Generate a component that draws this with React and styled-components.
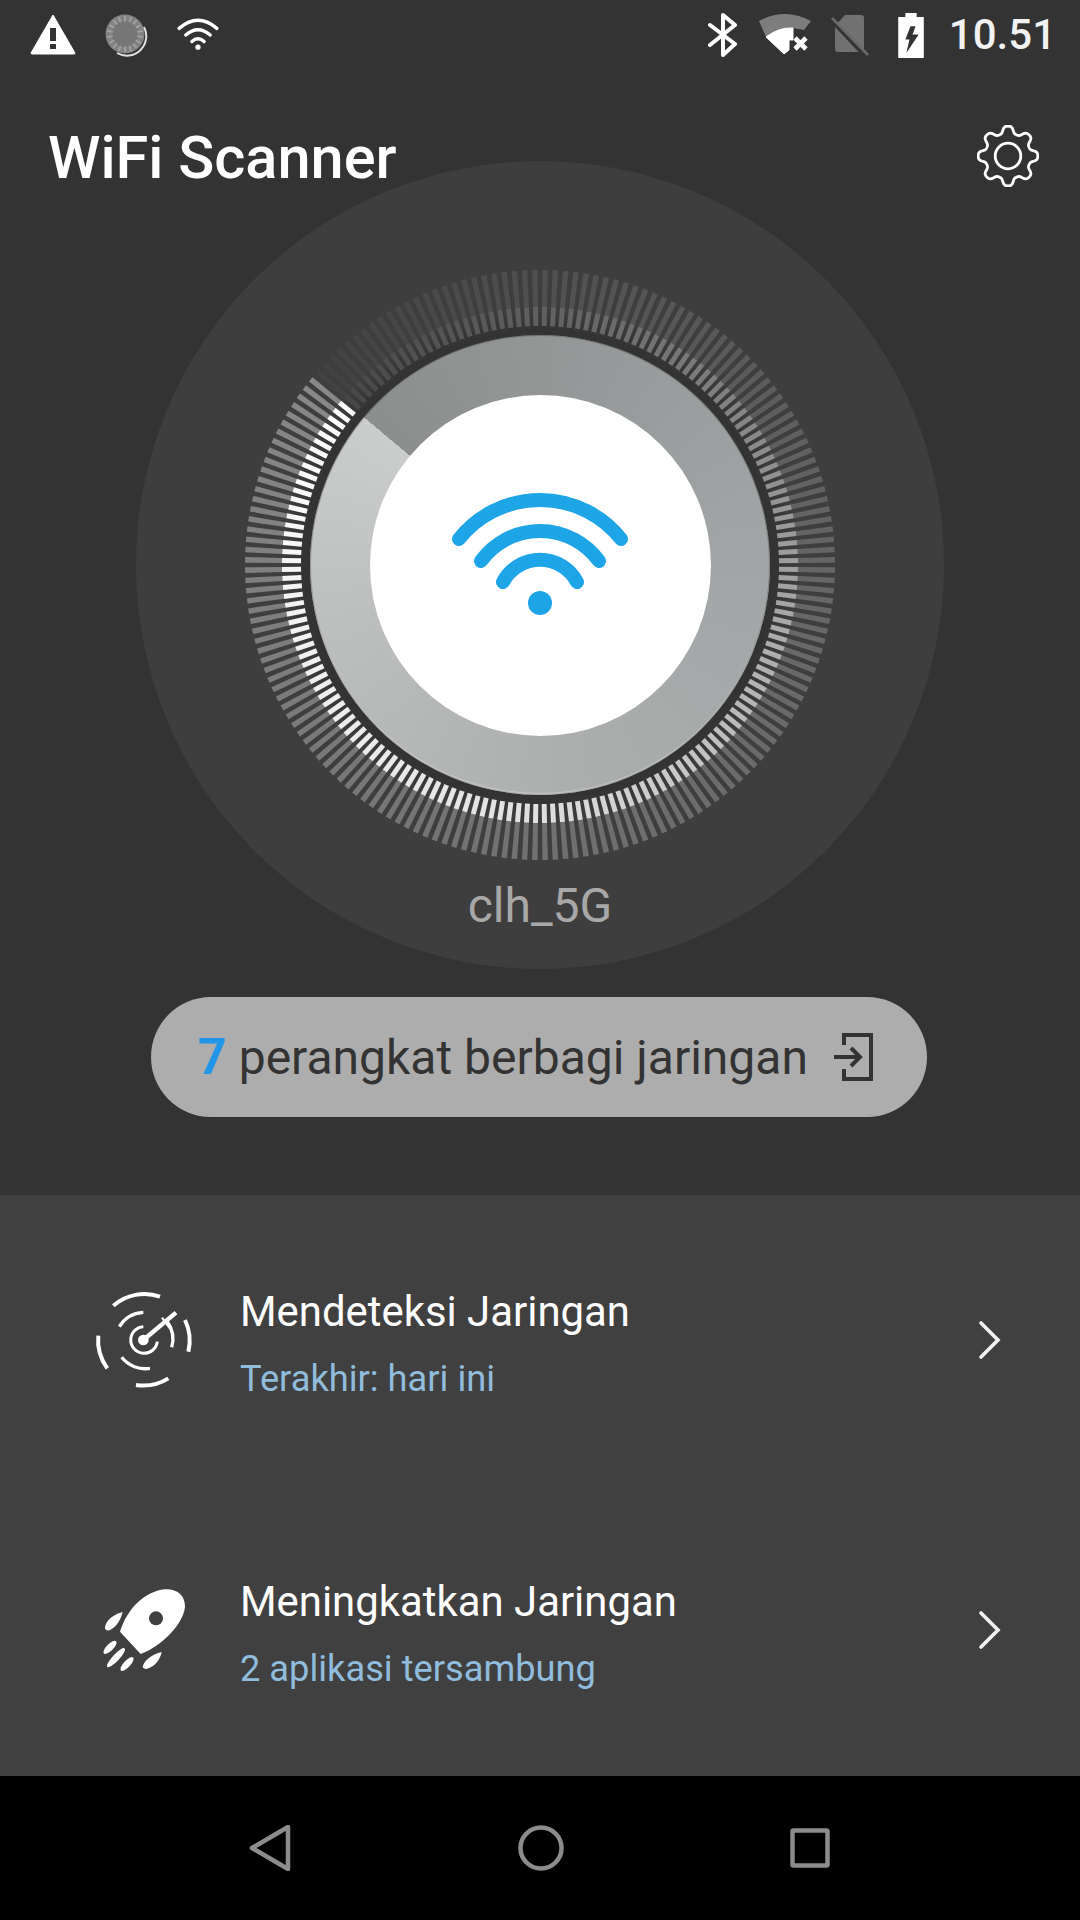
import React from 'react';
import styled, { createGlobalStyle } from 'styled-components';

const Global = createGlobalStyle`
  html, body { margin: 0; padding: 0; background: #000; }
  body { font-family: Roboto, "Liberation Sans", sans-serif; }
`;
const Screen = styled.div`
  width: 1080px; height: 1920px; display: flex; flex-direction: column; background: #333333; overflow: hidden;
`;
const StatusBar = styled.div`
  height: 70px; display: flex; align-items: center; justify-content: space-between; padding: 0 24px 0 30px; flex: none;
`;
const IconGroup = styled.div`
  display: flex; align-items: center; gap: ${p => p.$gap}px;
`;
const Clock = styled.span`
  font-size: 42px; font-weight: 500; color: #f2f2f2; margin-left: 5px; line-height: 48px;
`;
const Header = styled.div`
  height: 100px; display: flex; align-items: center; justify-content: space-between; padding: 0 41px 0 48px; position: relative; z-index: 2; flex: none; margin-top: 36px;
`;
const Title = styled.h1`
  margin: 0; padding-top: 4px; font-size: 59.5px; font-weight: 500; color: #fff;
`;
const Hero = styled.div`
  height: 1034px; flex: none; display: flex; flex-direction: column; align-items: center; margin-top: -45px;
`;
const Dial = styled.div`
  width: 808px; height: 808px; border-radius: 50%; background: #3e3e3e; flex: none; position: relative; display: flex; align-items: center; justify-content: center;
`;
const Ticks = styled.svg`
  position: absolute; inset: 0;
`;
const GaugeRim = styled.div`
  width: 516px; height: 516px; border-radius: 50%;
  background: radial-gradient(closest-side, #333 0, #333 91%, #3e3e3e 100%);
  display: flex; align-items: center; justify-content: center;
`;
const Gauge = styled.div`
  width: 460px; height: 460px; border-radius: 50%;
  background: conic-gradient(from -50deg, #8c8e8e 0deg, #a0a4a4 130deg, #acaeae 220deg, #bcbdbd 300deg, #cbcccc 360deg);
  box-shadow: inset 0 -2px 1px rgba(255,255,255,0.3), inset 0 0 0 1px rgba(60,60,60,0.35);
  display: flex; align-items: center; justify-content: center;
`;
const Core = styled.div`
  width: 341px; height: 341px; border-radius: 50%; background: #fff; display: flex; align-items: center; justify-content: center;
`;
const NetworkName = styled.div`
  position: absolute; left: 0; right: 0; top: 716px; text-align: center; font-size: 48px; color: #a8a8a8;
`;
const Pill = styled.div`
  margin: 28px 2px 0 0; width: 776px; height: 120px; border-radius: 60px; background: #adadad; display: flex; align-items: center; padding: 0 50px 0 47px; box-sizing: border-box; color: #333; font-size: 48px; flex: none;
`;
const Count = styled.span`
  color: #2196e8; font-weight: 700; font-size: 50px; margin-right: 12px;
`;
const PillText = styled.span`
  flex: 1;
`;
const Panel = styled.div`
  height: 581px; background: #404040; display: flex; flex-direction: column; flex: none;
`;
const Row = styled.div`
  height: 290px; display: flex; align-items: center; padding: 0 78px 0 80px; flex: none;
`;
const RowIcon = styled.div`
  width: 160px; display: flex; flex: none;
`;
const RowText = styled.div`
  flex: 1; display: flex; flex-direction: column; gap: 22px; padding-top: 7px;
`;
const RowTitle = styled.div`
  font-size: 41.9px; color: #fff; line-height: 48px;
`;
const RowSub = styled.div`
  font-size: 36.25px; color: #90bcdd; line-height: 42px;
`;
const NavBar = styled.div`
  flex: 1; background: #000; display: flex; align-items: center; justify-content: space-between; padding: 0 250px 0 249px;
`;

const OUTER = [[0, 0x42], [0.14, 0x50], [0.39, 0x66], [0.64, 0x70], [0.89, 0x80], [1, 0x88]];
const INNER = [[0, 0x48], [0.14, 0x60], [0.39, 0xa0], [0.64, 0xe0], [0.89, 0xf6], [1, 0xff]];
function shade(stops, t) {
  for (let i = 1; i < stops.length; i++) {
    if (t <= stops[i][0]) {
      const [a, va] = stops[i - 1];
      const [b, vb] = stops[i];
      const v = Math.round(va + ((t - a) / (b - a)) * (vb - va));
      return `rgb(${v},${v},${v})`;
    }
  }
  return '#fff';
}

function TickRing() {
  const items = [];
  const c = 404;
  for (let i = 0; i < 180; i++) {
    const t = i / 180;
    const deg = -50 + i * 2 + 1;
    items.push(
      <g key={i} transform={`rotate(${deg} ${c} ${c})`}>
        <path d={`M${c - 2.4} ${c - 258} L${c + 2.4} ${c - 258} L${c + 2.8} ${c - 295} L${c - 2.8} ${c - 295} Z`} fill={shade(OUTER, t)} />
        <rect x={c - 2.5} y={c - 258} width={5} height={19} fill={shade(INNER, t)} />
      </g>
    );
  }
  return <Ticks width="808" height="808" viewBox="0 0 808 808">{items}</Ticks>;
}

function gearPath() {
  const pts = [];
  const n = 360;
  const k = Math.tanh(1.6);
  for (let i = 0; i < n; i++) {
    const a = (i / n) * Math.PI * 2;
    const r = 26.3 + 3.5 * (Math.tanh(1.6 * Math.cos(8 * a)) / k);
    pts.push(`${(31 + r * Math.cos(a)).toFixed(2)} ${(31 + r * Math.sin(a)).toFixed(2)}`);
  }
  return `M${pts.join(' L')} Z`;
}

const Warning = () => (
  <svg width="46" height="42" viewBox="0 0 46 42"><path d="M23 1 L45 39 Q45 40 44 40 L2 40 Q1 40 1 39 Z" fill="#fff" stroke="#fff" strokeLinejoin="round" /><rect x="20" y="14" width="6" height="13" fill="#333" /><rect x="20" y="30" width="6" height="5" fill="#333" /></svg>
);
const Spinner = () => (
  <svg width="44" height="44" viewBox="0 0 44 44" style={{ marginLeft: 29 }}>
    <circle cx="20" cy="21" r="19.5" fill="#828282" />
    <circle cx="20" cy="21" r="13" fill="#767676" />
    {Array.from({ length: 18 }, (_, i) => <rect key={i} x="19.1" y="3" width="1.8" height="5.5" fill="#a2a2a2" transform={`rotate(${i * 20} 20 21)`} />)}
    <path d="M39 14 A19.5 19.5 0 0 1 12 40" fill="none" stroke="#fff" strokeWidth="2" opacity="0.85" />
  </svg>
);
const WifiSmall = () => (
  <svg width="42" height="32" viewBox="0 0 44 34" style={{ marginLeft: 28, marginTop: -3 }} fill="none" stroke="#fff" strokeWidth="3.6" strokeLinecap="round">
    <path d="M2 11 Q22 -6 42 11" /><path d="M9 18 Q22 7 35 18" /><path d="M15.5 25 Q22 19 28.5 25" />
    <circle cx="22" cy="31" r="2.8" fill="#fff" stroke="none" />
  </svg>
);
const Bluetooth = () => (
  <svg width="31" height="44" viewBox="0 0 31 44" fill="none" stroke="#fff" strokeWidth="4" strokeLinejoin="round" strokeLinecap="round">
    <path d="M2 12 L27 31 L15 42 L15 2 L27 12 L2 32" />
  </svg>
);
const WifiOff = () => (
  <svg width="52" height="42" viewBox="0 0 52 42">
    <path d="M0 7 Q26 -7 52 7 L45 16 L34 14 L7 23 Z" fill="#7d7d7d" />
    <path d="M7 23 Q20 13 34 14 V26 H30 V36 L25 40 Z" fill="#fff" stroke="#fff" strokeLinejoin="round" />
    <path d="M36 24 L47 35 M47 24 L36 35" stroke="#fff" strokeWidth="4.6" />
  </svg>
);
const SimOff = () => (
  <svg width="47" height="44" viewBox="0 0 47 44" style={{ marginTop: 2 }}>
    <path d="M14 1 H30 Q33 1 33 4 V38 H7 Q4 38 4 35 V12 Z" fill="#717171" />
    <path d="M1 7 L34 42" stroke="#333" strokeWidth="4" />
    <path d="M1 4 L37 41" stroke="#6a6a6a" strokeWidth="2.6" />
  </svg>
);
const Battery = () => (
  <svg width="26" height="45" viewBox="0 0 25 44">
    <path d="M7 0 H18 V4 H25 V44 H0 V4 H7 Z" fill="#fff" />
    <path d="M12 13 H17 L14 21 H20 L8 39 L11 26 H7 Z" fill="#333" />
  </svg>
);
const Gear = () => (
  <svg width="62" height="62" viewBox="0 0 62 62" fill="none" stroke="#fff" strokeWidth="2.8" strokeLinejoin="round">
    <circle cx="31" cy="31" r="12.8" />
    <path d={gearPath()} />
  </svg>
);
const WifiBig = () => (
  <svg width="190" height="150" viewBox="0 0 190 150" fill="none" stroke="#1ea5e8" strokeWidth="14" strokeLinecap="round">
    <path d="M14 49 A103.6 103.6 0 0 1 176 49" />
    <path d="M36 71 A73 73 0 0 1 154 71" />
    <path d="M58 92 A42 42 0 0 1 132 92" />
    <circle cx="95" cy="113" r="12" fill="#1ea5e8" stroke="none" />
  </svg>
);
const Enter = () => (
  <svg width="44" height="50" viewBox="0 0 44 50" fill="none" stroke="#333" strokeWidth="4" style={{ flex: 'none' }}>
    <path d="M11 13 V3 H38 V47 H11 V37" />
    <path d="M1 25 H26 M18 16 L27 25 L18 34" />
  </svg>
);
const Radar = () => (
  <svg width="140" height="140" viewBox="0 0 420 420" fill="none" stroke="#fff" strokeWidth="12">
    <path d="M100 107 A142 142 0 0 1 240 80" />
    <path d="M315 150 A142 142 0 0 1 325 245" />
    <path d="M168 345 A142 142 0 0 0 265 325" />
    <path d="M55 197 A142 142 0 0 0 82 295" />
    <path d="M118 170 A90 90 0 0 1 190 127" strokeWidth="10" />
    <path d="M262 155 A90 90 0 0 1 275 232" strokeWidth="10" />
    <path d="M125 262 A90 90 0 0 0 210 295" strokeWidth="10" />
    <path d="M190 170 A40 40 0 1 0 232 215" strokeWidth="9" />
    <path d="M190 210 L288 128" strokeWidth="13" />
    <path d="M246 143 L270 175" strokeWidth="7" />
    <circle cx="190" cy="210" r="16" fill="#fff" stroke="none" />
  </svg>
);
const Rocket = () => (
  <svg width="140" height="140" viewBox="0 0 420 420" fill="#fff">
    <path d="M120 215 C140 150 190 95 255 88 C290 86 315 105 315 140 C310 190 250 255 182 282 Z" />
    <circle cx="228" cy="175" r="21" fill="#404040" />
    <path d="M128 156 C95 165 75 185 75 205 Q78 215 90 210 C110 200 122 180 128 156 Z" />
    <path d="M245 276 C210 285 190 305 188 322 Q195 330 205 325 C225 318 240 300 245 276 Z" />
    <ellipse cx="90" cy="262" rx="26" ry="10" transform="rotate(-45 90 262)" />
    <ellipse cx="108" cy="293" rx="38" ry="10" transform="rotate(-47 108 293)" />
    <ellipse cx="141" cy="312" rx="27" ry="10" transform="rotate(-47 141 312)" />
  </svg>
);
const Chevron = () => (
  <svg width="26" height="40" viewBox="0 0 26 40" fill="none" stroke="#f2f2f2" strokeWidth="3.6" strokeLinecap="round" style={{ flex: 'none' }}>
    <path d="M5 3 L22 20 L5 37" />
  </svg>
);
const NavBack = () => (
  <svg width="42" height="46" viewBox="0 0 42 46" fill="none" stroke="#8c8c8c" strokeWidth="4.5" strokeLinejoin="round"><path d="M3 23 L39 2 V44 Z" /></svg>
);
const NavHome = () => (
  <svg width="46" height="46" viewBox="0 0 46 46" fill="none" stroke="#8c8c8c" strokeWidth="4.5"><circle cx="23" cy="23" r="20.5" /></svg>
);
const NavRecent = () => (
  <svg width="40" height="40" viewBox="0 0 40 40" fill="none" stroke="#8c8c8c" strokeWidth="4.5" strokeLinejoin="round"><rect x="2.5" y="2.5" width="35" height="35" rx="1" /></svg>
);

export default function App() {
  return (
    <Screen>
      <Global />
      <StatusBar>
        <IconGroup $gap={0}><Warning /><Spinner /><WifiSmall /></IconGroup>
        <IconGroup $gap={20}><Bluetooth /><WifiOff /><SimOff /><Battery /><Clock>10.51</Clock></IconGroup>
      </StatusBar>
      <Header><Title>WiFi Scanner</Title><Gear /></Header>
      <Hero>
        <Dial>
          <GaugeRim><Gauge><Core><WifiBig /></Core></Gauge></GaugeRim>
          <TickRing />
          <NetworkName>clh_5G</NetworkName>
        </Dial>
        <Pill><Count>7</Count><PillText>perangkat berbagi jaringan</PillText><Enter /></Pill>
      </Hero>
      <Panel>
        <Row>
          <RowIcon><Radar /></RowIcon>
          <RowText><RowTitle>Mendeteksi Jaringan</RowTitle><RowSub>Terakhir: hari ini</RowSub></RowText>
          <Chevron />
        </Row>
        <Row>
          <RowIcon><Rocket /></RowIcon>
          <RowText><RowTitle>Meningkatkan Jaringan</RowTitle><RowSub>2 aplikasi tersambung</RowSub></RowText>
          <Chevron />
        </Row>
      </Panel>
      <NavBar><NavBack /><NavHome /><NavRecent /></NavBar>
    </Screen>
  );
}
